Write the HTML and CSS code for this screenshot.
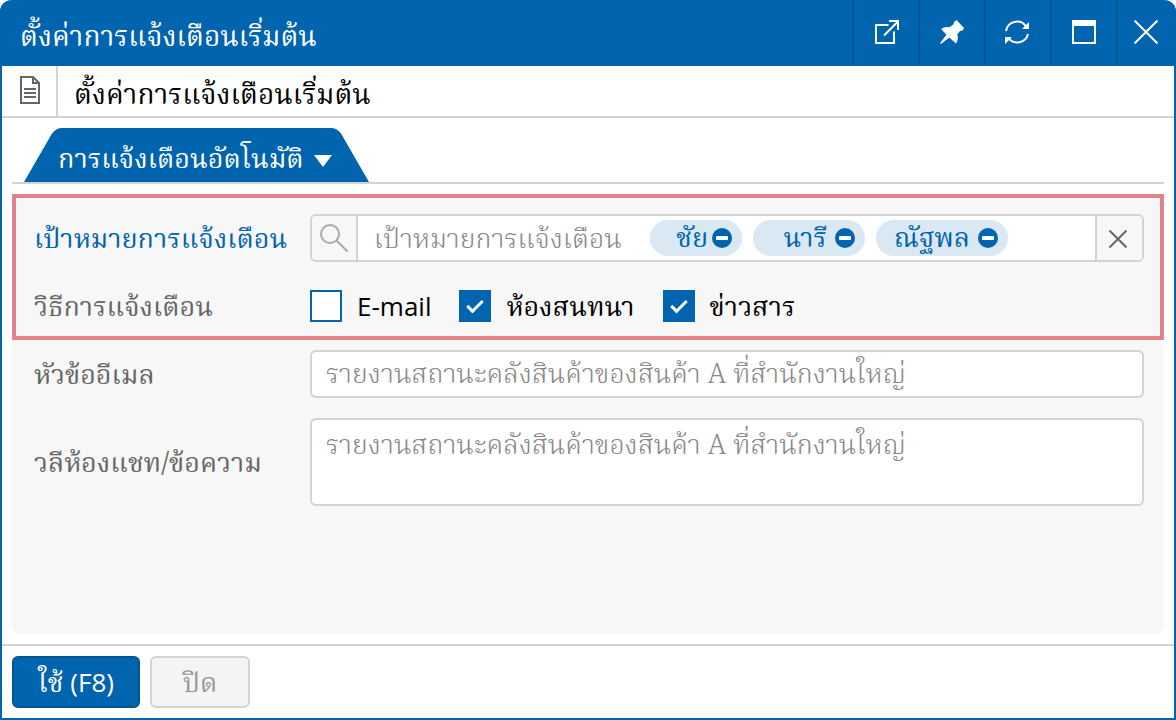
FILE: index.html
```html
<!DOCTYPE html>
<html lang="th">
<head>
<meta charset="utf-8">
<meta name="viewport" content="width=device-width, initial-scale=1">
<title>ตั้งค่าการแจ้งเตือนเริ่มต้น</title>
<link rel="stylesheet" href="styles.css">
</head>
<body>
<div class="window">
  <header class="titlebar">
    <h1 class="titlebar-text">ตั้งค่าการแจ้งเตือนเริ่มต้น</h1>
    <div class="titlebar-actions">
      <button class="tool" type="button" aria-label="เปิดในหน้าต่างใหม่">
        <svg width="26" height="24" viewBox="-2 0 26 24" fill="none" stroke="#fff" stroke-width="2"><path d="M13.500 5H1v18h18V11.500M9 15.500L22.500 2M14 1h9v9"/></svg>
      </button>
      <button class="tool" type="button" aria-label="ปักหมุด">
        <svg width="24" height="24" viewBox="0 0 24 24" fill="#fff"><path d="M16.500 0L24 8Q23 11.500 20 11L17.200 14.500Q19 19 16 23.500L9.300 17.500L1 24L0 23.200L6.500 14.700L1 9Q5 6 9.500 7.300L13.500 4.300Q13.500 1.500 16.500 0Z"/></svg>
      </button>
      <button class="tool" type="button" aria-label="รีเฟรช">
        <svg width="26" height="24" viewBox="0 0 26 24" fill="none" stroke="#fff" stroke-width="2"><path d="M1 11A11 11 0 0 1 21 6.500M23 14A11 11 0 0 1 3.500 18"/><path d="M24 2v7h-7zM0 24v-7h7z" fill="#fff" stroke="none"/></svg>
      </button>
      <button class="tool" type="button" aria-label="ขยายหน้าต่าง">
        <svg width="24" height="24" viewBox="0 0 24 24" fill="none" stroke="#fff" stroke-width="2"><path d="M1 1h22v22H1z"/><path d="M0 0h24v6H0z" fill="#fff" stroke="none"/></svg>
      </button>
      <button class="tool tool-close" type="button" aria-label="ปิดหน้าต่าง">
        <svg width="24" height="24" viewBox="0 0 24 24" stroke="#fff" stroke-width="2"><path d="M.5.5l23 23M23.500.5l-23 23"/></svg>
      </button>
    </div>
  </header>

  <div class="subject">
    <div class="subject-icon">
      <svg width="20" height="28" viewBox="0 0 20 28" fill="none" stroke="#666" stroke-width="2"><path d="M1 1h12l6 6v20H1zM13 1v6h6M4 13h12M4 17h12M4 21h12"/></svg>
    </div>
    <h2 class="subject-text">ตั้งค่าการแจ้งเตือนเริ่มต้น</h2>
  </div>

  <main class="content">
    <nav class="tabs">
      <button class="tab" type="button">การแจ้งเตือนอัตโนมัติ
        <svg width="18" height="12" viewBox="0 0 18 12" fill="#fff"><path d="M0 0h18L9 12z"/></svg>
      </button>
    </nav>

    <form class="panel" id="alert-form">
      <div class="highlight">
        <div class="row">
          <label class="label label-active" for="target">เป้าหมายการแจ้งเตือน</label>
          <div class="picker">
            <button class="picker-button" type="button" aria-label="ค้นหา">
              <svg width="28" height="28" viewBox="0 0 28 28" fill="none" stroke="#aaa" stroke-width="2"><circle cx="10" cy="10" r="9"/><path d="M16.500 16.500L27.500 27.500"/></svg>
            </button>
            <input class="picker-input" id="target" type="text" placeholder="เป้าหมายการแจ้งเตือน">
            <ul class="chips">
              <li class="chip chip-small"><span class="caption">ชัย</span><button class="chip-remove" type="button" aria-label="ลบ ชัย"></button></li>
              <li class="chip chip-medium"><span class="caption">นารี</span><button class="chip-remove" type="button" aria-label="ลบ นารี"></button></li>
              <li class="chip chip-large"><span class="caption">ณัฐพล</span><button class="chip-remove" type="button" aria-label="ลบ ณัฐพล"></button></li>
            </ul>
            <button class="picker-button picker-clear" type="button" aria-label="ล้าง">
              <svg width="18" height="18" viewBox="0 0 18 18" stroke="#666" stroke-width="2"><path d="M.5.5l17 17M17.500.5l-17 17"/></svg>
            </button>
          </div>
        </div>
        <div class="row" role="group" aria-labelledby="method">
          <span class="label" id="method">วิธีการแจ้งเตือน</span>
          <div class="options">
            <label class="option"><input class="check" type="checkbox"><span class="latin">E-mail</span></label>
            <label class="option"><input class="check" type="checkbox" checked><span class="caption">ห้องสนทนา</span></label>
            <label class="option"><input class="check" type="checkbox" checked><span class="caption">ข่าวสาร</span></label>
          </div>
        </div>
      </div>
      <div class="fields">
        <div class="row">
          <label class="label" for="title">หัวข้ออีเมล</label>
          <input class="field" id="title" type="text" placeholder="รายงานสถานะคลังสินค้าของสินค้า A ที่สำนักงานใหญ่">
        </div>
        <div class="row">
          <label class="label" for="message">วลีห้องแชท/ข้อความ</label>
          <textarea class="field field-area" id="message" placeholder="รายงานสถานะคลังสินค้าของสินค้า A ที่สำนักงานใหญ่"></textarea>
        </div>
      </div>
    </form>
  </main>

  <footer class="footer">
    <button class="button button-primary" type="submit" form="alert-form">ใช้ <span class="latin">(F8)</span></button>
    <button class="button" type="button">ปิด</button>
  </footer>
</div>
</body>
</html>
```
FILE: styles.css
```css
:root {
  --blue: #0064ae;
  --blue-dark: #005594;
  --line: #d3d3d3;
  --panel: #f7f7f7;
  --thai: "Noto Serif Thai", "Liberation Serif", serif;
  --latin: "Open Sans", "Noto Sans", sans-serif;
}

*, *::before, *::after { box-sizing: border-box; }

body {
  margin: 0;
  font: 27px/40px var(--thai);
  color: #000;
  background: #fff;
}

button, input, textarea { font: inherit; margin: 0; }
button { padding: 0; border: 0; cursor: pointer; }
svg { display: block; }

.window {
  display: flex;
  flex-direction: column;
  min-height: 100vh;
  border: 2px solid var(--blue);
  border-top: 0;
  border-radius: 12px 12px 0 0;
}

.titlebar {
  display: flex;
  justify-content: space-between;
  height: 66px;
  margin: 0 -2px;
  padding-left: 20px;
  color: #fff;
  background: var(--blue);
  border-radius: 12px 12px 0 0;
}

.titlebar-text, .subject-text {
  margin: 0;
  font-size: 28px;
  font-weight: 400;
  white-space: nowrap;
}

.titlebar-text { padding-top: 19px; }
.titlebar-actions { display: flex; height: 64px; }

.tool {
  display: grid;
  place-items: center;
  width: 66px;
  background: none;
  border-left: 2px solid var(--blue-dark);
}

.tool-close { width: 60px; padding-right: 2px; }

.subject {
  display: flex;
  height: 52px;
  border-bottom: 2px solid var(--line);
}

.subject-icon {
  display: grid;
  place-items: center;
  width: 56px;
  padding-left: 2px;
  padding-bottom: 2px;
  border-right: 2px solid var(--line);
}

.subject-text { padding: 11px 16px 0; }

.content {
  display: flex;
  flex: 1;
  flex-direction: column;
  padding: 10px;
}

.tabs {
  display: flex;
  height: 56px;
  margin-bottom: 10px;
  padding-left: 12px;
  border-bottom: 2px solid var(--line);
}

.tab {
  position: relative;
  isolation: isolate;
  display: flex;
  align-items: center;
  gap: 10px;
  padding: 11px 38px 0 34px;
  color: #fff;
  background: none;
}

.tab::before, .tab::after {
  content: "";
  position: absolute;
  z-index: -1;
  top: 0;
  bottom: 0;
  width: 60%;
  background: var(--blue);
}

.tab::before {
  left: 0;
  border-top-left-radius: 6px;
  transform: skewX(-30deg);
  transform-origin: left bottom;
}

.tab::after {
  right: 0;
  border-top-right-radius: 6px;
  transform: skewX(30deg);
  transform-origin: right bottom;
}

.panel {
  flex: 1;
  background: var(--panel);
  border-radius: 0 0 8px 8px;
}

.highlight {
  display: flex;
  flex-direction: column;
  gap: 24px;
  padding: 16px 16px 10px 18px;
  border: 4px solid #e2838b;
}

.fields {
  display: flex;
  flex-direction: column;
  gap: 20px;
  padding: 10px 20px 20px 22px;
}

.row {
  display: grid;
  grid-template-columns: 276px 1fr;
  align-items: center;
}

.label, .caption {
  height: 40px;
  padding-top: 3px;
  white-space: nowrap;
}

.label { color: #666; }
.label-active { color: var(--blue); }

.picker {
  display: flex;
  height: 48px;
  overflow: hidden;
  background: #fff;
  border: 2px solid var(--line);
  border-radius: 6px;
}

.picker-button {
  display: grid;
  flex: none;
  place-items: center;
  width: 46px;
  background: var(--panel);
  border-right: 2px solid var(--line);
}

.picker-clear {
  width: 47px;
  padding: 2px 3px 0 0;
  border-right: 0;
  border-left: 2px solid var(--line);
}

.picker-input {
  flex: 0 1 292px;
  min-width: 0;
  padding: 5px 16px 0;
  background: none;
  border: 0;
  outline: 0;
}

::placeholder { color: #888; opacity: 1; font-weight: 300; }

.chips {
  display: flex;
  flex: 1;
  align-items: center;
  gap: 11px;
  margin: 0;
  padding: 0;
  list-style: none;
}

.chip {
  display: flex;
  align-items: center;
  justify-content: flex-end;
  height: 36px;
  padding-right: 10px;
  color: var(--blue);
  background: #dae8f4;
  border-radius: 18px;
}

.chip .caption { padding-top: 2px; }

.chip-small { gap: 4px; width: 92px; }
.chip-medium { gap: 8px; width: 112px; }
.chip-large { gap: 8px; width: 132px; }

.chip-remove {
  display: grid;
  flex: none;
  place-items: center;
  width: 20px;
  height: 20px;
  background: var(--blue);
  border-radius: 50%;
}

.chip-remove::before {
  content: "";
  width: 12px;
  height: 4px;
  background: #fff;
  border-radius: 1px;
}

.options { display: flex; gap: 28px; }

.option {
  display: flex;
  align-items: center;
  gap: 15px;
  white-space: nowrap;
}

.latin { font-family: var(--latin); font-size: 26px; }

.check {
  appearance: none;
  display: grid;
  place-items: center;
  width: 32px;
  height: 32px;
  margin: 0;
  background: #fff;
  border: 2px solid var(--blue);
}

.check:checked { background: var(--blue); }

.check:checked::before {
  content: "";
  width: 16px;
  height: 9px;
  margin-bottom: 3px;
  border: solid #fff;
  border-width: 0 0 3px 3px;
  transform: rotate(-45deg);
}

.field {
  display: block;
  width: 100%;
  height: 48px;
  padding: 3px 14px 0;
  background: #fff;
  border: 2px solid var(--line);
  border-radius: 6px;
}

.field-area {
  height: 88px;
  padding-top: 7px;
  resize: none;
}

.footer {
  display: flex;
  gap: 10px;
  padding: 10px;
  border-top: 2px solid var(--line);
}

.button {
  min-width: 100px;
  height: 52px;
  padding: 5px 20px 0;
  color: #999;
  background: #f4f4f4;
  border: 2px solid var(--line);
  border-radius: 6px;
}

.button-primary {
  min-width: 128px;
  padding-top: 2px;
  color: #fff;
  background: var(--blue);
  border-color: var(--blue-dark);
}
```
